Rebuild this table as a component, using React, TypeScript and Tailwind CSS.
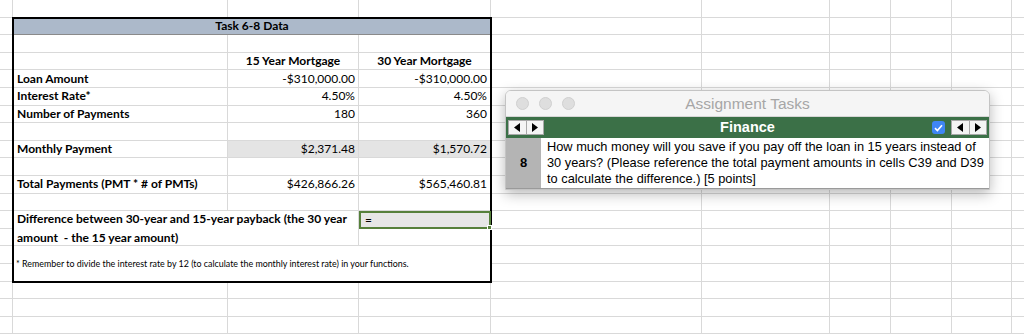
import React from 'react';

const COLS = [
  'w-[13px]',
  'w-[215px]',
  'w-[131px]',
  'w-[132px]',
  'w-[211px]',
  'w-[128px]',
  'w-[61px]',
  'w-[61px]',
  'w-[60px]',
  'w-[40px]',
];
const RIGHT = COLS.slice(4);

const cell = 'h-[17.6px] shrink-0 border-b border-r border-[#d9d9d9]';

const EmptyRow: React.FC<{ cols: string[] }> = ({ cols }) => (
  <div className="flex">
    {cols.map((w, i) => (
      <div key={i} className={`${cell} ${w}`} />
    ))}
  </div>
);

const Arrows: React.FC = () => (
  <div className="flex h-[15px] w-[36px] border border-[#a8a8a8] bg-[#f4f4f4]">
    <div className="flex flex-1 items-center justify-center border-r border-[#a8a8a8]">
      <svg width="7" height="9" viewBox="0 0 7 9">
        <polygon points="6,0 6,9 0,4.5" fill="#000" />
      </svg>
    </div>
    <div className="flex flex-1 items-center justify-center">
      <svg width="7" height="9" viewBox="0 0 7 9">
        <polygon points="1,0 1,9 7,4.5" fill="#000" />
      </svg>
    </div>
  </div>
);

type Line = { a?: string; b?: string; c?: string; gray?: boolean; center?: boolean };

const lines: Line[] = [
  {},
  { b: '15 Year Mortgage', c: '30 Year Mortgage', center: true },
  { a: 'Loan Amount', b: '-$310,000.00', c: '-$310,000.00' },
  { a: 'Interest Rate*', b: '4.50%', c: '4.50%' },
  { a: 'Number of Payments', b: '180', c: '360' },
  {},
  { a: 'Monthly Payment', b: '$2,371.48', c: '$1,570.72', gray: true },
  {},
  { a: 'Total Payments (PMT * # of PMTs)', b: '$426,866.26', c: '$565,460.81' },
  {},
];

const DataBlock: React.FC = () => (
  <div className="relative z-10 grid grid-cols-[215px_131px_132px] grid-rows-[repeat(15,17.6px)] outline-2 outline-black -outline-offset-1 text-[12px] text-black">
    <div className="col-span-3 flex items-center justify-center border-b border-[#8a8a8a] bg-[#acb9ca] font-bold">
      Task 6-8 Data
    </div>
    {lines.map((l, i) => (
      <React.Fragment key={i}>
        <div className="flex items-center border-b border-r border-[#d9d9d9] pl-[4px] font-bold whitespace-nowrap">
          {l.a}
        </div>
        <div
          className={`flex items-center border-b border-r border-[#d9d9d9] px-[3px] whitespace-nowrap ${
            l.center ? 'justify-center font-bold' : 'justify-end'
          } ${l.gray ? 'bg-[#e4e4e4]' : ''}`}
        >
          {l.b}
        </div>
        <div
          className={`flex items-center border-b border-r border-[#d9d9d9] px-[3px] whitespace-nowrap ${
            l.center ? 'justify-center font-bold' : 'justify-end'
          } ${l.gray ? 'bg-[#e4e4e4]' : ''}`}
        >
          {l.c}
        </div>
      </React.Fragment>
    ))}
    <div className="col-span-2 row-span-2 flex flex-col justify-center border-b border-r border-[#d9d9d9] pl-[4px] font-bold leading-[19px] whitespace-nowrap">
      <span>Difference between 30-year and 15-year payback (the 30 year</span>
      <span>amount &nbsp;- the 15 year amount)</span>
    </div>
    <div className="relative z-20 flex items-center border-2 border-[#56803b] bg-[#e6e6e6] pl-[4px]">
      =
      <span className="absolute -bottom-[3px] -right-[3px] h-[5px] w-[5px] border border-white bg-[#56803b]" />
    </div>
    <div className="border-b border-r border-[#d9d9d9]" />
    <div className="col-span-3 row-span-2 flex items-center pl-[3px] text-[8.9px] whitespace-nowrap">
      * Remember to divide the interest rate by 12 (to calculate the monthly interest rate) in your functions.
    </div>
  </div>
);

const App: React.FC = () => {
  return (
    <div
      className="relative h-[335px] w-[1024px] overflow-hidden bg-white"
      style={{ fontFamily: 'Lato, "Liberation Sans", sans-serif' }}
    >
      <EmptyRow cols={COLS} />
      <div className="flex">
        <div className="flex flex-col">
          {Array.from({ length: 15 }).map((_, i) => (
            <div key={i} className={`${cell} w-[13px]`} />
          ))}
        </div>
        <DataBlock />
        <div className="flex flex-col">
          {Array.from({ length: 15 }).map((_, i) => (
            <EmptyRow key={i} cols={RIGHT} />
          ))}
        </div>
      </div>
      <EmptyRow cols={COLS} />
      <EmptyRow cols={COLS} />
      <EmptyRow cols={COLS} />

      {/* Assignment Tasks floating window */}
      <div
        className="absolute left-[505px] top-[90px] w-[485px] overflow-hidden rounded-t-[6px] border border-[#c4c4c4] bg-white shadow-[0_4px_14px_rgba(0,0,0,0.28)]"
        style={{ fontFamily: '"Liberation Sans", Arial, sans-serif' }}
      >
        <div className="grid h-[26px] grid-cols-[1fr_auto_1fr] items-center border-b border-[#d6d6d6] bg-[#f5f5f5] px-[10px]">
          <div className="flex gap-[10px]">
            <span className="h-[13px] w-[13px] rounded-full border border-[#d0d0d0] bg-[#dedede]" />
            <span className="h-[13px] w-[13px] rounded-full border border-[#d0d0d0] bg-[#dedede]" />
            <span className="h-[13px] w-[13px] rounded-full border border-[#d0d0d0] bg-[#dedede]" />
          </div>
          <div className="text-[15.5px] text-[#a6a6a6]">Assignment Tasks</div>
          <div />
        </div>
        <div className="grid h-[21px] grid-cols-[1fr_auto_1fr] items-center bg-[#3b7047] px-[2px]">
          <Arrows />
          <div className="text-[14.5px] font-bold text-white">Finance</div>
          <div className="flex items-center justify-end gap-[6px]">
            <span className="flex h-[13px] w-[13px] items-center justify-center rounded-[3px] bg-[#3f86f4]">
              <svg width="9" height="8" viewBox="0 0 9 8">
                <path d="M1 4.2 L3.4 6.5 L8 1.2" stroke="#fff" strokeWidth="1.6" fill="none" />
              </svg>
            </span>
            <Arrows />
          </div>
        </div>
        <div className="flex border-b border-[#9a9a9a]">
          <div className="flex w-[35px] shrink-0 items-center justify-center bg-[#b4b4b4] text-[13px] font-bold text-black">
            8
          </div>
          <div className="flex min-w-0 flex-col py-[1px] pl-[6px] pr-[2px] text-[12.8px] leading-[16px] whitespace-nowrap text-black">
            <span>How much money will you save if you pay off the loan in 15 years instead of</span>
            <span>30 years? (Please reference the total payment amounts in cells C39 and D39</span>
            <span>to calculate the difference.) [5 points]</span>
          </div>
        </div>
      </div>
    </div>
  );
};

export default App;
